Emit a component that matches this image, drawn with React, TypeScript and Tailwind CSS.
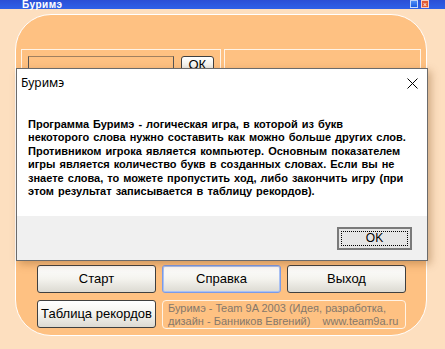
import React from 'react';

const xpButton =
  'flex items-center justify-center rounded-[3px] border border-[#3f3f3f] bg-gradient-to-b from-[#ffffff] via-[#f4f3ee] to-[#dcdad2] text-[13px] text-black';

const App = () => {
  return (
    <div className="relative h-[349px] w-[445px] overflow-hidden bg-[#fddfbf] font-['Liberation_Sans',Arial,sans-serif]">
      {/* window title bar */}
      <div className="flex h-[9px] items-center justify-between bg-gradient-to-b from-[#2a4fd6] to-[#2f61e8] pl-[22px] pr-[16px]">
        <div className="text-[10px] font-bold leading-[9px] tracking-[0.5px] text-white">Буримэ</div>
        <div className="flex items-start gap-[3px] self-start">
          <div className="h-[8px] w-[8px] border border-white/70 bg-gradient-to-b from-[#4d8cf6] to-[#1d5be0]" />
          <div className="flex h-[8px] w-[8px] items-center justify-center border border-white/70 bg-[#e05a33] text-[7px] leading-none text-white">×</div>
        </div>
      </div>

      {/* main orange panel */}
      <div className="ml-[15px] mt-[5px] flex h-[322px] w-[412px] flex-col rounded-[36px] border border-white bg-[#fec182] px-[5px] pt-[34px]">
        <div className="flex h-[210px] gap-[3px]">
          <div className="flex w-[200px] gap-[7px] border border-[#fff3e6] px-[6px] pt-[6px]">
            <div className="h-[16px] w-[148px] border-l border-r border-t border-l-[#555] border-r-[#555] border-t-[#a08060]" />
            <div className={`${xpButton} h-[18px] w-[34px] text-[12px]`}>ОК</div>
          </div>
          <div className="w-[200px] border border-[#fff3e6]" />
        </div>

        <div className="mt-[6px] flex flex-col gap-[7px] pl-[16px]">
          <div className="flex gap-[6px]">
            <div className={`${xpButton} h-[28px] w-[119px]`}>Старт</div>
            <div className={`${xpButton} h-[28px] w-[119px] border-[#7b9be8] shadow-[inset_0_0_0_1px_#a9c1f3]`}>Справка</div>
            <div className={`${xpButton} h-[28px] w-[119px]`}>Выход</div>
          </div>
          <div className="flex gap-[6px]">
            <div className={`${xpButton} h-[28px] w-[119px]`}>Таблица рекордов</div>
            <div className="flex h-[29px] w-[244px] flex-col justify-center whitespace-nowrap rounded-[4px] border border-[#fff3e6] px-[5px] text-[11px] leading-[13px] text-[#85786b]">
              <div>Буримэ - Team 9A 2003 (Идея, разработка,</div>
              <div>дизайн - Банников Евгений)&nbsp;&nbsp;&nbsp; www.team9a.ru</div>
            </div>
          </div>
        </div>
      </div>

      {/* message box over the window */}
      <div className="absolute left-[16px] top-[68px] flex h-[193px] w-[412px] flex-col border border-[#6b6b6b] bg-white shadow-[3px_3px_8px_rgba(120,70,20,0.35)]">
        <div className="flex h-[26px] items-center justify-between pl-[4px] pr-[9px] pt-[2px] font-['Noto_Sans',sans-serif] text-[12px] text-black">
          <span>Буримэ</span>
          <svg width="11" height="11" viewBox="0 0 11 11" className="text-black">
            <path d="M0.5 0.5 L10.5 10.5 M10.5 0.5 L0.5 10.5" stroke="currentColor" strokeWidth="1" />
          </svg>
        </div>
        <div className="flex-1 whitespace-nowrap px-[11px] pt-[23px] text-[11px] font-bold leading-[13.4px] text-black [word-spacing:1px]">
          <p>Программа Буримэ - логическая игра, в которой из букв</p>
          <p>некоторого слова нужно составить как можно больше других слов.</p>
          <p>Противником игрока является компьютер. Основным показателем</p>
          <p>игры является количество букв в созданных словах. Если вы не</p>
          <p>знаете слова, то можете пропустить ход, либо закончить игру (при</p>
          <p>этом результат записывается в таблицу рекордов).</p>
        </div>
        <div className="flex h-[44px] items-center justify-end bg-[#f0f0f0] pr-[15px]">
          <div className="flex h-[23px] w-[75px] items-center justify-center border-2 border-[#7a7a7a] bg-[#e5e5e5] p-[2px]">
            <div className="flex h-full w-full items-center justify-center border border-dotted border-black text-[12px] text-black">OK</div>
          </div>
        </div>
      </div>
    </div>
  );
};

export default App;
